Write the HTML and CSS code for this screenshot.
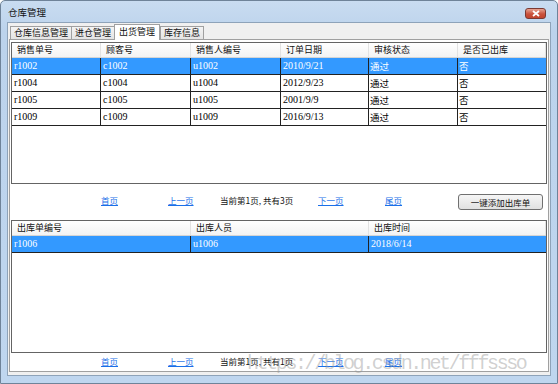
FILE: index.html
```html
<!DOCTYPE html>
<html>
<head>
<meta charset="utf-8">
<link rel="stylesheet" href="styles.css">
</head>
<body>
<div class="window">
  <div class="titlebar">
    <span class="title">仓库管理</span>
    <span class="close"><svg width="10" height="7" viewBox="0 0 10 7"><path d="M2 1 L8 6 M8 1 L2 6" stroke="#fff" stroke-width="1.8"/></svg></span>
  </div>
  <div class="client">
    <div class="tabs">
      <span class="tab">仓库信息管理</span>
      <span class="tab">进仓管理</span>
      <span class="tab active">出货管理</span>
      <span class="tab">库存信息</span>
    </div>
    <div class="page">
      <div class="grid g1">
        <div class="row head"><span>销售单号</span><span>顾客号</span><span>销售人编号</span><span>订单日期</span><span>审核状态</span><span>是否已出库</span></div>
        <div class="row sel"><span class="d">r1002</span><span class="d">c1002</span><span class="d">u1002</span><span class="d">2010/9/21</span><span>通过</span><span>否</span></div>
        <div class="row"><span class="d">r1004</span><span class="d">c1004</span><span class="d">u1004</span><span class="d">2012/9/23</span><span>通过</span><span>否</span></div>
        <div class="row"><span class="d">r1005</span><span class="d">c1005</span><span class="d">u1005</span><span class="d">2001/9/9</span><span>通过</span><span>否</span></div>
        <div class="row"><span class="d">r1009</span><span class="d">c1009</span><span class="d">u1009</span><span class="d">2016/9/13</span><span>通过</span><span>否</span></div>
      </div>
      <div class="pager p1">
        <a class="lk">首页</a>
        <a class="lk">上一页</a>
        <span class="info">当前第1页, 共有3页</span>
        <a class="lk">下一页</a>
        <a class="lk">尾页</a>
        <button class="btn">一键添加出库单</button>
      </div>
      <div class="grid g2">
        <div class="row head"><span>出库单编号</span><span>出库人员</span><span>出库时间</span></div>
        <div class="row sel"><span class="d">r1006</span><span class="d">u1006</span><span class="d">2018/6/14</span></div>
      </div>
      <div class="pager p2">
        <a class="lk">首页</a>
        <a class="lk">上一页</a>
        <span class="info">当前第1页, 共有1页</span>
        <a class="lk">下一页</a>
        <a class="lk">尾页</a>
      </div>
    </div>
  </div>
  <div class="watermark">https://blog.csdn.net/fffssso</div>
</div>
</body>
</html>
```
FILE: styles.css
```css
* { box-sizing: border-box; }
html, body { margin: 0; padding: 0; }
body {
  width: 558px; height: 384px; overflow: hidden;
  font-family: "Noto Sans CJK SC", "Noto Sans", sans-serif;
  font-size: 9px; color: #000;
}
.window {
  position: relative;
  width: 558px; height: 384px;
  background: linear-gradient(#c9dcf1, #bcd3ec 30px, #bfd6ef);
  border: 1px solid #6f8399;
  border-radius: 5px 5px 0 0;
  display: flex; flex-direction: column;
  padding: 0 6px 7px 6px;
}
.titlebar {
  height: 21px; flex: none;
  display: flex; align-items: center; justify-content: space-between;
  padding: 2px 5px 0 1px;
}
.title { font-size: 9.5px; color: #111; line-height: 1; }
.close {
  width: 21px; height: 11px; margin-top: 2px;
  background: linear-gradient(#e8a493, #c9523d 55%, #c2452e);
  border: 1px solid #7b3a33; border-radius: 3px;
  display: flex; align-items: center; justify-content: center;
}
.close svg { display: block; }
.client {
  flex: 1;
  background: #f0f0f0;
  border: 1px solid #8ea3b9;
  display: flex; flex-direction: column;
  padding: 1px 1px 3px 1px;
}
.tabs { display: flex; height: 15px; flex: none; padding-left: 1px; align-items: flex-end; }
.tab {
  height: 13px; padding: 0 3px;
  border: 1px solid #a0a0a0; border-bottom: none;
  background: linear-gradient(#f4f4f4, #e4e4e4);
  font-size: 9px; line-height: 12px; color: #111;
  margin-right: -1px;
}
.tab.active {
  height: 16px; background: #fff; position: relative; z-index: 1;
  padding: 0 4px; margin: 0 0 -1px 0; line-height: 14px;
}
.page {
  flex: 1;
  background: #fff;
  border: 1px solid #a0a0a0;
  display: flex; flex-direction: column;
  padding: 2px 1px 0 1px;
}
.grid {
  border: 1px solid #646464;
  background: #fff;
  display: flex; flex-direction: column; flex: none;
}
.g1 { height: 142px; }
.g2 { height: 133px; }
.row { display: grid; height: 17px; border-bottom: 1px solid #222; flex: none; }
.g1 .row { grid-template-columns: 89px 90px 90px 88px 89px 1fr; }
.g2 .row { grid-template-columns: 179px 178px 1fr; }
.row span {
  border-right: 1px solid #222;
  padding-left: 1px;
  line-height: 16px;
  white-space: nowrap; overflow: hidden;
  font-size: 9.5px;
}
.row span:last-child { border-right: none; }
.row.head { height: 15px; border-bottom: 1px solid #d5d5d5; background: linear-gradient(#ffffff, #f3f3f3); }
.row.head span { border-right: 1px solid #e2e2e2; line-height: 14px; padding-left: 5px; color: #111; font-size: 9px; }
.row.sel { background: #3399ff; color: #fff; }
.row .d { font-family: "Liberation Serif", "DejaVu Serif", serif; font-size: 10px; padding-left: 2px; }
.pager {
  display: grid;
  grid-template-columns: 90px 67px 52px 98px 67px 60px 1fr;
  align-items: center; flex: none;
}
.pager > :first-child { grid-column: 2; }
.p1 { height: 36px; padding-bottom: 4px; }
.p2 { flex: 1; padding-bottom: 2px; }
.lk { color: #1a6fe8; text-decoration: underline; font-size: 8.5px; }
.info { font-size: 8.5px; color: #111; white-space: nowrap; }
.btn {
  justify-self: end; margin-right: 4px; margin-top: 3px;
  width: 85px; height: 16px; padding: 0;
  font-family: "Noto Sans CJK SC", sans-serif; font-size: 8.5px; color: #111;
  background: linear-gradient(#f6f6f6, #e1e1e1);
  border: 1px solid #707070; border-radius: 3px;
}
.watermark {
  position: absolute; left: 246px; top: 351px;
  font-family: "Liberation Mono", "DejaVu Sans Mono", monospace;
  font-size: 20px; line-height: 24px; color: rgba(150,150,150,0.45);
  letter-spacing: -2.4px;
  pointer-events: none; white-space: nowrap;
}
```
